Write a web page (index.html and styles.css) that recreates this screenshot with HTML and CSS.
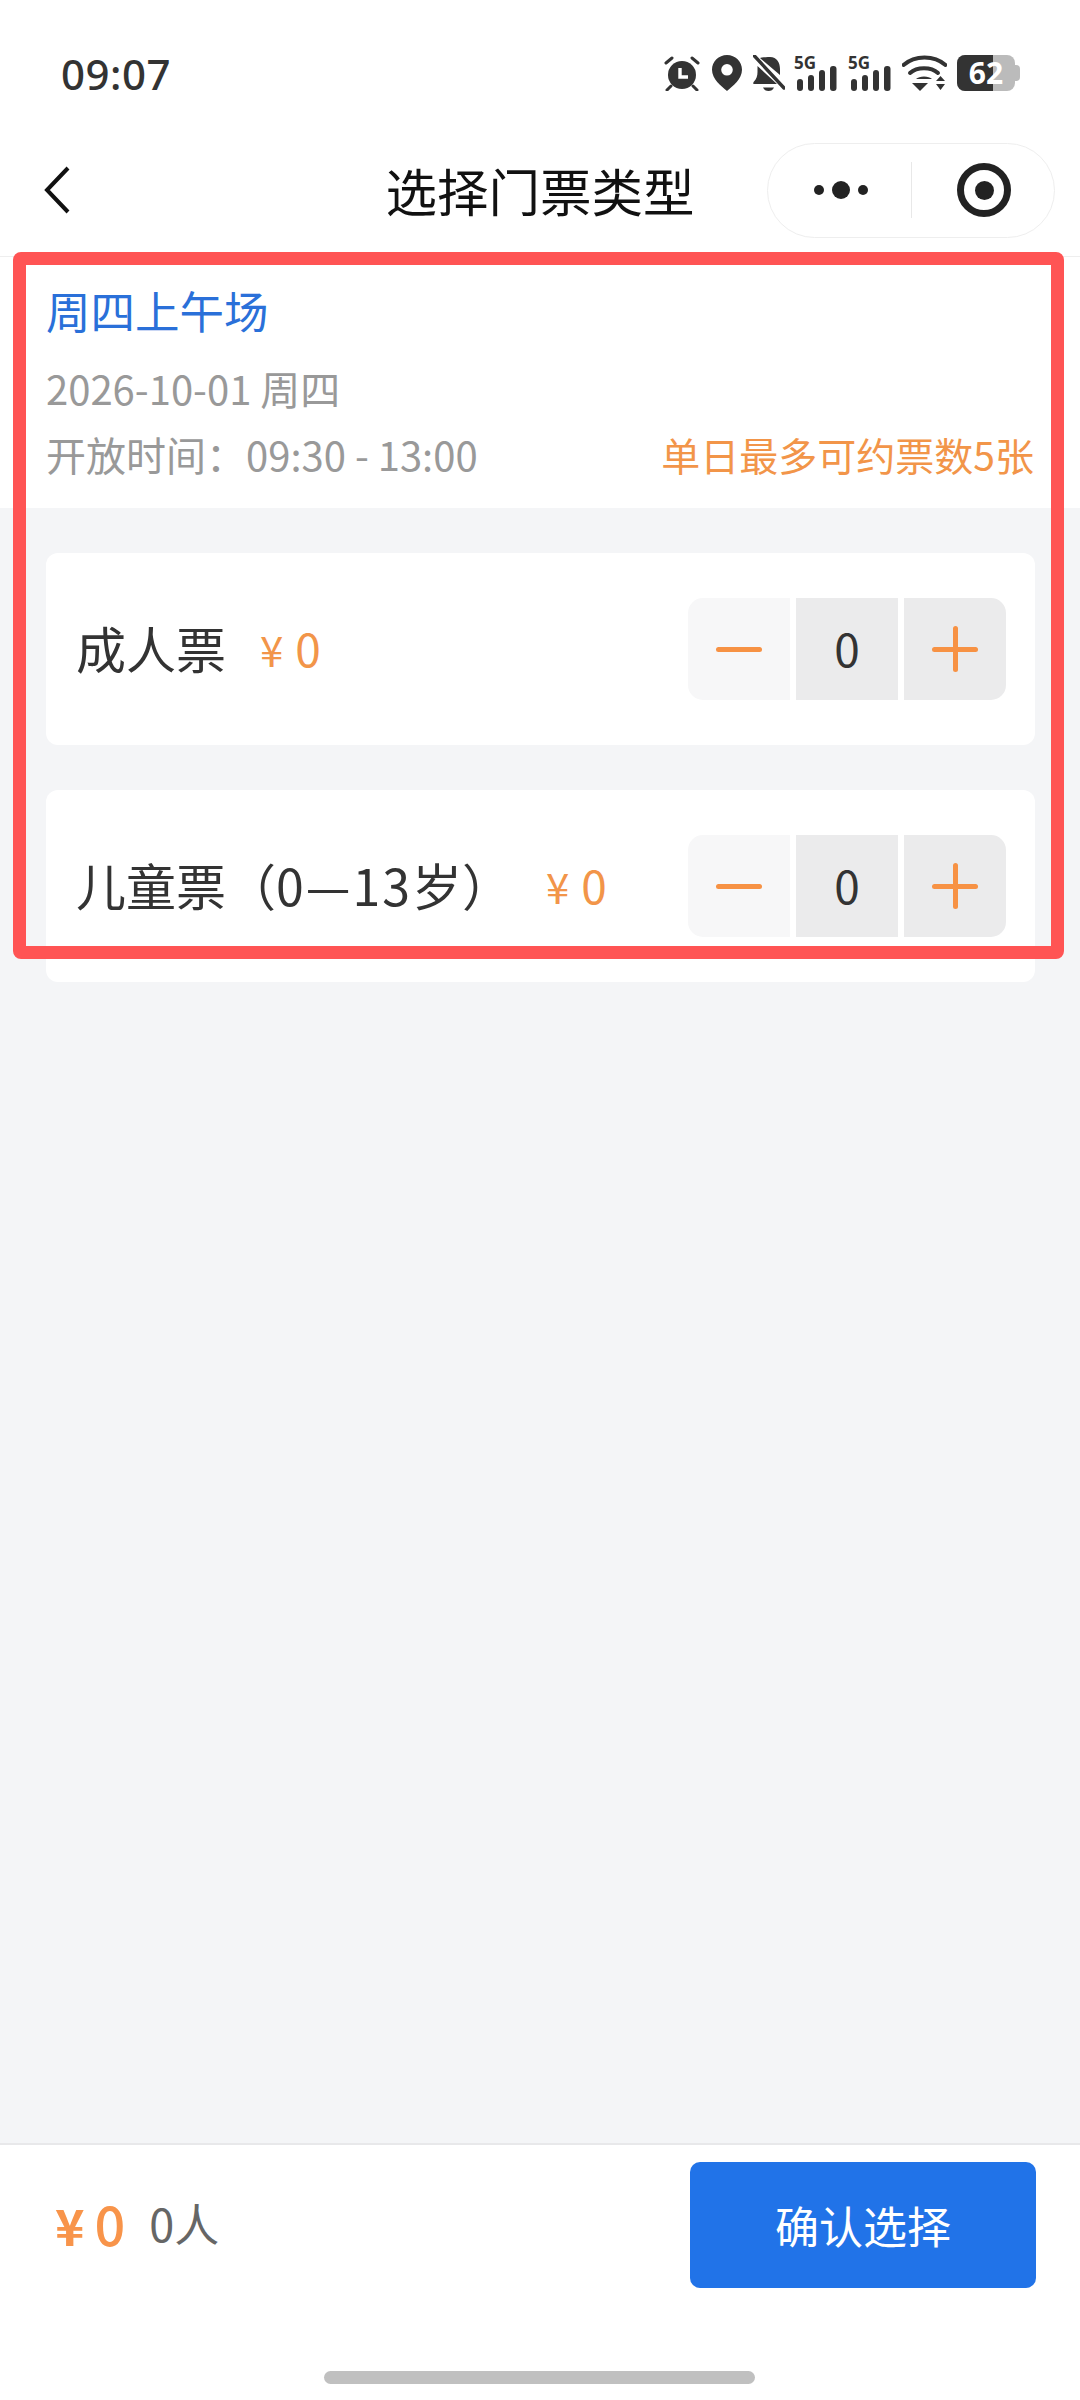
FILE: index.html
```html
<!DOCTYPE html>
<html>
  <head>
    <meta charset="utf-8" />
    <title>选择门票类型</title>
    <link rel="stylesheet" href="styles.css">
  </head>
  <body>
    <!-- Status bar -->
    <div class="status-bar">
      <span class="status-time">09:07</span>
      <div class="status-icons">
        <svg class="icon-alarm" viewBox="0 0 36 36">
          <path d="M2 8 L8 3 M34 8 L28 3" stroke="#333" stroke-width="3" stroke-linecap="round" fill="none" />
          <path d="M7 31 L3 35 M29 31 L33 35" stroke="#333" stroke-width="3" stroke-linecap="round" fill="none" />
          <circle cx="18" cy="20" r="14" fill="#333" />
          <path d="M16 13 V22 H24" stroke="#fff" stroke-width="3.4" fill="none" />
        </svg>
        <svg class="icon-pin" viewBox="0 0 30 36">
          <path fill-rule="evenodd" fill="#333" d="M15 0 C6.7 0 0 6.6 0 14.8 C0 24 9 31 15 36 C21 31 30 24 30 14.8 C30 6.6 23.3 0 15 0 Z M15 9 A5.8 5.8 0 1 1 15 20.6 A5.8 5.8 0 1 1 15 9 Z" />
        </svg>
        <svg class="icon-bell" viewBox="0 0 32 36">
          <path fill="#333" d="M17 2 C24 2 27 8 27 14 V20 L7 3 C9 2.500 13 2 17 2 Z M4.500 11 L24 29 H1 C0 29 0 27.500 1 26.500 C3.500 24 4.500 21 4.500 17 Z" />
          <path d="M10 32.500 H21 C20 35 18 36 15.500 36 C13 36 11 35 10 32.500 Z" fill="#333" />
          <path d="M1.500 1 L31 33" stroke="#333" stroke-width="3.400" stroke-linecap="round" />
        </svg>
        <div class="signal">
          <span class="signal-label">5G</span>
          <svg class="icon-bars" viewBox="0 0 42 36">
            <rect x="2" y="24" width="6" height="12" rx="3" fill="#333" />
            <rect x="13" y="20" width="6" height="16" rx="3" fill="#333" />
            <rect x="24" y="15" width="6" height="21" rx="3" fill="#333" />
            <rect x="35" y="11" width="6.500" height="25" rx="3" fill="#333" />
          </svg>
        </div>
        <div class="signal">
          <span class="signal-label">5G</span>
          <svg class="icon-bars" viewBox="0 0 42 36">
            <rect x="2" y="24" width="6" height="12" rx="3" fill="#333" />
            <rect x="13" y="20" width="6" height="16" rx="3" fill="#333" />
            <rect x="24" y="15" width="6" height="21" rx="3" fill="#333" />
            <rect x="35" y="11" width="6.500" height="25" rx="3" fill="#333" />
          </svg>
        </div>
        <svg class="icon-wifi" viewBox="0 0 45 36">
          <path d="M1.500 10 C13 0 32 0 43.500 10" stroke="#333" stroke-width="4" fill="none" stroke-linecap="round" />
          <path d="M8 18 C15 11.500 29 11.500 36 18" stroke="#333" stroke-width="4" fill="none" stroke-linecap="round" />
          <path d="M14 24 L30 24 C27 20.500 17 20.500 14 24 Z" fill="#333" />
          <path d="M14 28 H30 L22 36 Z" fill="#333" transform="translate(-4 0)" />
          <path d="M34 26 L38.500 21 L43 26 Z M34 29 H43 L38.500 35 Z" fill="#333" />
        </svg>
        <div class="battery">
          <div class="battery-body">
            <div class="battery-fill" style="width: 62%"></div>
            <span class="battery-text">62</span>
          </div>
          <div class="battery-cap"></div>
        </div>
      </div>
    </div>

    <!-- Title bar -->
    <div class="nav-bar">
      <svg class="nav-back" viewBox="0 0 26 48">
        <path d="M24 2 L3 24 L24 46" stroke="#111" stroke-width="4" fill="none" />
      </svg>
      <h1 class="nav-title">选择门票类型</h1>
      <div class="capsule">
        <div class="capsule-more">
          <span class="dot"></span>
          <span class="dot dot-big"></span>
          <span class="dot"></span>
        </div>
        <div class="capsule-line"></div>
        <div class="capsule-close">
          <span class="capsule-target"></span>
        </div>
      </div>
    </div>

    <!-- Session info -->
    <div class="session">
      <div class="session-name">周四上午场</div>
      <div class="session-date">2026-10-01 周四</div>
      <div class="session-row">
        <span>开放时间：09:30 - 13:00</span>
        <span class="session-limit">单日最多可约票数5张</span>
      </div>
    </div>

    <!-- Ticket list -->
    <div class="ticket-list">
      <div class="ticket-card">
        <div class="ticket-info">
          <span class="ticket-name">成人票</span>
          <span class="ticket-price"><span class="yen">¥</span>0</span>
        </div>
        <div class="stepper">
          <div class="step-btn step-minus"><span class="bar-h"></span></div>
          <div class="step-value">0</div>
          <div class="step-btn step-plus"><span class="bar-h"></span><span class="bar-v"></span></div>
        </div>
      </div>

      <div class="ticket-card">
        <div class="ticket-info">
          <span class="ticket-name">儿童票（<span class="ticket-age">0—13</span>岁）</span>
          <span class="ticket-price"><span class="yen">¥</span>0</span>
        </div>
        <div class="stepper">
          <div class="step-btn step-minus"><span class="bar-h"></span></div>
          <div class="step-value">0</div>
          <div class="step-btn step-plus"><span class="bar-h"></span><span class="bar-v"></span></div>
        </div>
      </div>
    </div>

    <!-- Bottom bar -->
    <div class="bottom-bar">
      <div class="bottom-row">
        <div class="total">
          <span class="total-price"><span class="total-yen">¥</span>0</span>
          <span class="total-people">0人</span>
        </div>
        <button class="confirm-btn">确认选择</button>
      </div>
      <div class="home-bar"></div>
    </div>

    <!-- Red annotation frame -->
    <div class="red-frame"></div>
  </body>
</html>
```

FILE: styles.css
```css
* {
  box-sizing: border-box;
}

body {
  position: relative;
  width: 1080px;
  height: 2400px;
  margin: 0;
  display: flex;
  flex-direction: column;
  overflow: hidden;
  background-color: #f4f5f7;
  color: #333;
  font-family: "Noto Sans CJK SC", "Noto Sans", sans-serif;
}

/* status bar */
.status-bar {
  height: 124px;
  padding: 22px 60px 0 61px;
  background: #fff;
  display: flex;
  align-items: center;
  justify-content: space-between;
}

.status-time {
  font-family: "Noto Sans", sans-serif;
  font-size: 42px;
  font-weight: 500;
  letter-spacing: 0.5px;
  color: #333;
}

.status-icons {
  display: flex;
  align-items: center;
}

.status-icons svg {
  height: 36px;
  flex: none;
}

.icon-alarm {
  width: 36px;
}

.icon-pin {
  width: 30px;
  margin-left: 12px;
}

.icon-bell {
  width: 32px;
  margin-left: 11px;
}

.signal {
  position: relative;
  width: 42px;
  height: 36px;
  margin-left: 10px;
}

.signal + .signal {
  margin-left: 12px;
}

.icon-bars {
  display: block;
  width: 42px;
}

.signal-label {
  position: absolute;
  left: -1px;
  top: -2px;
  font-family: "Noto Sans", sans-serif;
  font-size: 17px;
  font-weight: 700;
  line-height: 20px;
  color: #333;
}

.icon-wifi {
  width: 45px;
  margin-left: 11px;
}

.battery {
  display: flex;
  align-items: center;
  margin-left: 10px;
}

.battery-body {
  position: relative;
  width: 58px;
  height: 36px;
  background: #bbb;
  border-radius: 8px;
  display: flex;
  align-items: center;
  justify-content: center;
}

.battery-fill {
  position: absolute;
  left: 0;
  top: 0;
  bottom: 0;
  background: #333;
  border-radius: 8px 0 0 8px;
}

.battery-text {
  position: relative;
  color: #fff;
  font-family: "Noto Sans", sans-serif;
  font-size: 30px;
  font-weight: 700;
  line-height: 36px;
}

.battery-cap {
  width: 5px;
  height: 16px;
  background: #bbb;
  border-radius: 0 4px 4px 0;
}

/* title bar */
.nav-bar {
  position: relative;
  height: 133px;
  background: #fff;
  border-bottom: 1px solid #eee;
  display: flex;
  align-items: center;
  justify-content: space-between;
  padding: 0 25px 0 44px;
}

.nav-back {
  width: 26px;
  height: 48px;
}

.nav-title {
  position: absolute;
  left: 0;
  right: 0;
  margin: 0;
  padding-bottom: 2px;
  text-align: center;
  font-size: 51.5px;
  font-weight: 400;
  color: #111;
}

.capsule {
  width: 288px;
  height: 95px;
  border: 1px solid #eee;
  border-radius: 48px;
  display: flex;
  align-items: center;
}

.capsule-more,
.capsule-close {
  flex: 1;
  display: flex;
  align-items: center;
  justify-content: center;
}

.capsule-more {
  gap: 8px;
  padding-left: 3px;
}

.capsule-close {
  padding-left: 2px;
}

.capsule-line {
  width: 1px;
  height: 56px;
  background: #e8e8e8;
}

.dot {
  width: 10px;
  height: 10px;
  border-radius: 50%;
  background: #222;
}

.dot-big {
  width: 18px;
  height: 18px;
}

.capsule-target {
  width: 54px;
  height: 54px;
  border-radius: 50%;
  border: 7px solid #222;
  display: flex;
  align-items: center;
  justify-content: center;
}

.capsule-target::before {
  content: "";
  width: 19px;
  height: 19px;
  border-radius: 50%;
  background: #222;
}

/* session info */
.session {
  height: 251px;
  padding: 28px 46px 0 46px;
  background: #fff;
  font-size: 40px;
  color: #999;
}

.session-name {
  height: 50px;
  line-height: 50px;
  font-size: 44.5px;
  color: #2a70d9;
}

.session-date {
  height: 50px;
  line-height: 50px;
  margin-top: 28px;
}

.session-row {
  height: 50px;
  line-height: 50px;
  margin-top: 16px;
  display: flex;
  justify-content: space-between;
}

.session-limit {
  font-size: 39px;
  color: #f29549;
}

/* ticket list */
.ticket-list {
  flex: 1;
  padding: 45px 45px 0 46px;
  display: flex;
  flex-direction: column;
  gap: 45px;
}

.ticket-card {
  height: 192px;
  padding: 0 29px 0 30px;
  background: #fff;
  border-radius: 12px;
  display: flex;
  align-items: center;
  justify-content: space-between;
}

.ticket-info {
  display: flex;
  align-items: center;
  padding-bottom: 4px;
}

.ticket-name {
  font-size: 50px;
  color: #333;
}

.ticket-age {
  letter-spacing: 2px;
}

.ticket-price {
  margin-left: 34px;
  font-size: 46px;
  color: #f29549;
}

.yen {
  font-size: 42px;
  margin-right: 12px;
}

.stepper {
  display: flex;
  gap: 6px;
  height: 102px;
  border-radius: 15px;
  overflow: hidden;
}

.step-btn,
.step-value {
  position: relative;
  width: 102px;
  display: flex;
  align-items: center;
  justify-content: center;
  background: #ebebec;
}

.step-minus {
  background: #f7f7f8;
}

.step-value {
  font-size: 46px;
  padding-bottom: 4px;
  color: #333;
}

.bar-h {
  width: 46px;
  height: 5px;
  border-radius: 3px;
  background: #f79244;
}

.bar-v {
  position: absolute;
  width: 5px;
  height: 46px;
  border-radius: 3px;
  background: #f79244;
}

/* bottom bar */
.bottom-bar {
  height: 257px;
  background: #fff;
  border-top: 2px solid #e8e8ea;
  display: flex;
  flex-direction: column;
}

.bottom-row {
  height: 143px;
  padding: 17px 44px 0 55px;
  display: flex;
  align-items: flex-start;
  justify-content: space-between;
}

.total {
  height: 126px;
  padding-bottom: 5px;
  display: flex;
  align-items: center;
}

.total-price {
  font-size: 54px;
  font-weight: 500;
  color: #f8944a;
}

.total-yen {
  font-size: 50px;
  font-weight: 700;
  margin-right: 10px;
}

.total-people {
  margin-left: 24px;
  font-size: 45px;
  color: #666;
}

.confirm-btn {
  width: 346px;
  height: 126px;
  border: none;
  border-radius: 10px;
  background: #2173e8;
  color: #fff;
  font-family: inherit;
  font-size: 44px;
}

.home-bar {
  width: 431px;
  height: 13px;
  margin: 83px 0 0 324px;
  border-radius: 7px;
  background: #c0c0c0;
}

/* annotation drawn over the page */
.red-frame {
  position: absolute;
  left: 13px;
  top: 252px;
  width: 1051px;
  height: 707px;
  border: 13px solid #ff5454;
  border-radius: 8px;
  pointer-events: none;
}
```
